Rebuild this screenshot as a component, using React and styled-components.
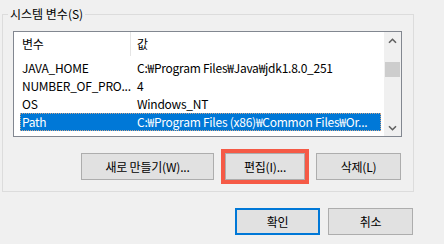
import React from 'react';
import styled, { createGlobalStyle } from 'styled-components';

const Global = createGlobalStyle`
  html, body { margin: 0; padding: 0; background: #f0f0f0; }
  body {
    font-family: "Noto Sans CJK KR", "Noto Sans", sans-serif;
    font-size: 12px;
    color: #000;
  }
  #root { width: 444px; height: 244px; overflow: hidden; }
`;

const Page = styled.div`
  width: 444px;
  height: 244px;
  box-sizing: border-box;
  padding: 6px 30px 0 2px;
  display: flex;
  flex-direction: column;
`;

const Group = styled.fieldset`
  margin: 0;
  padding: 0;
  min-width: 0;
  height: 186px;
  box-sizing: border-box;
  border: 1px solid #dcdcdc;
`;

const Legend = styled.legend`
  margin-left: 5px;
  padding: 0 2px;
  font-size: 12px;
  line-height: 16px;
  color: #000;
`;

const GroupBody = styled.div`
  padding: 9px 11px 0 10px;
  display: flex;
  flex-direction: column;
`;

const List = styled.div`
  height: 106px;
  box-sizing: border-box;
  border: 1px solid #828790;
  background: #fff;
  display: flex;
`;

const ListBody = styled.div`
  flex: 1;
  padding: 0 3px 0 6px;
  display: flex;
  flex-direction: column;
  overflow: hidden;
  letter-spacing: -0.25px;
`;

const Header = styled.div`
  display: grid;
  grid-template-columns: 111px 1fr;
  height: 24px;
  margin-bottom: 3px;
`;

const HeaderCell = styled.div`
  padding-left: ${p => (p.$first ? '2px' : '6px')};
  line-height: 23px;
  border-right: ${p => (p.$first ? '1px solid #e5e5e5' : 'none')};
  white-space: nowrap;
  overflow: hidden;
`;

const Row = styled.div`
  display: grid;
  grid-template-columns: 111px 1fr;
  height: 18px;
  line-height: 18px;
  box-sizing: border-box;
  background: ${p => (p.$selected ? '#0078d7' : 'transparent')};
  color: ${p => (p.$selected ? '#fff' : '#000')};
  outline: ${p => (p.$selected ? '1px dotted #c9a58a' : 'none')};
  outline-offset: -1px;
`;

const Cell = styled.div`
  padding-left: ${p => (p.$first ? '2px' : '6px')};
  white-space: nowrap;
  overflow: hidden;
`;

const ScrollBar = styled.div`
  width: 17px;
  background: #f0f0f0;
  display: flex;
  flex-direction: column;
`;

const ArrowBtn = styled.div`
  height: 17px;
  display: flex;
  align-items: center;
  justify-content: center;
`;

const Track = styled.div`
  flex: 1;
  padding-top: 13px;
`;

const Thumb = styled.div`
  height: 15px;
  margin: 0 1px;
  background: #cdcdcd;
`;

const ButtonRow = styled.div`
  margin-top: 16px;
  display: flex;
  justify-content: flex-end;
  gap: 11px;
  padding-right: 1px;
`;

const Button = styled.button`
  width: ${p => p.$w}px;
  height: 27px;
  box-sizing: border-box;
  padding: 0;
  border: ${p => (p.$default ? '2px solid #0078d7' : '1px solid #adadad')};
  background: #e1e1e1;
  font-family: "Noto Sans CJK KR", "Noto Sans", sans-serif;
  font-size: 12px;
  letter-spacing: -0.2px;
  color: #000;
  outline: ${p => (p.$marked ? '4px solid #f55a46' : 'none')};
  outline-offset: 0;
`;

const Footer = styled.div`
  margin-top: 16px;
  display: flex;
  justify-content: flex-end;
  gap: 8px;
  padding-right: 1px;
`;

const Chevron = ({ down }) => (
  <svg width="9" height="6" viewBox="0 0 9 6">
    <path
      d={down ? 'M1 1.2 L4.5 4.7 L8 1.2' : 'M1 4.8 L4.5 1.3 L8 4.8'}
      fill="none"
      stroke="#606060"
      strokeWidth="1.6"
    />
  </svg>
);

const rows = [
  ['JAVA_HOME', 'C:₩Program Files₩Java₩jdk1.8.0_251'],
  ['NUMBER_OF_PRO...', '4'],
  ['OS', 'Windows_NT'],
  ['Path', 'C:₩Program Files (x86)₩Common Files₩Or...'],
];

export default function App() {
  return (
    <>
      <Global />
      <Page>
        <Group>
          <Legend>시스템 변수(S)</Legend>
          <GroupBody>
            <List>
              <ListBody>
                <Header>
                  <HeaderCell $first>변수</HeaderCell>
                  <HeaderCell>값</HeaderCell>
                </Header>
                {rows.map(([k, v], i) => (
                  <Row key={k} $selected={i === 3}>
                    <Cell $first>{k}</Cell>
                    <Cell>{v}</Cell>
                  </Row>
                ))}
              </ListBody>
              <ScrollBar>
                <ArrowBtn><Chevron /></ArrowBtn>
                <Track><Thumb /></Track>
                <ArrowBtn><Chevron down /></ArrowBtn>
              </ScrollBar>
            </List>
            <ButtonRow>
              <Button $w={133}>새로 만들기(W)...</Button>
              <Button $w={80} $marked>편집(I)...</Button>
              <Button $w={85}>삭제(L)</Button>
            </ButtonRow>
          </GroupBody>
        </Group>
        <Footer>
          <Button $w={85} $default>확인</Button>
          <Button $w={85}>취소</Button>
        </Footer>
      </Page>
    </>
  );
}
